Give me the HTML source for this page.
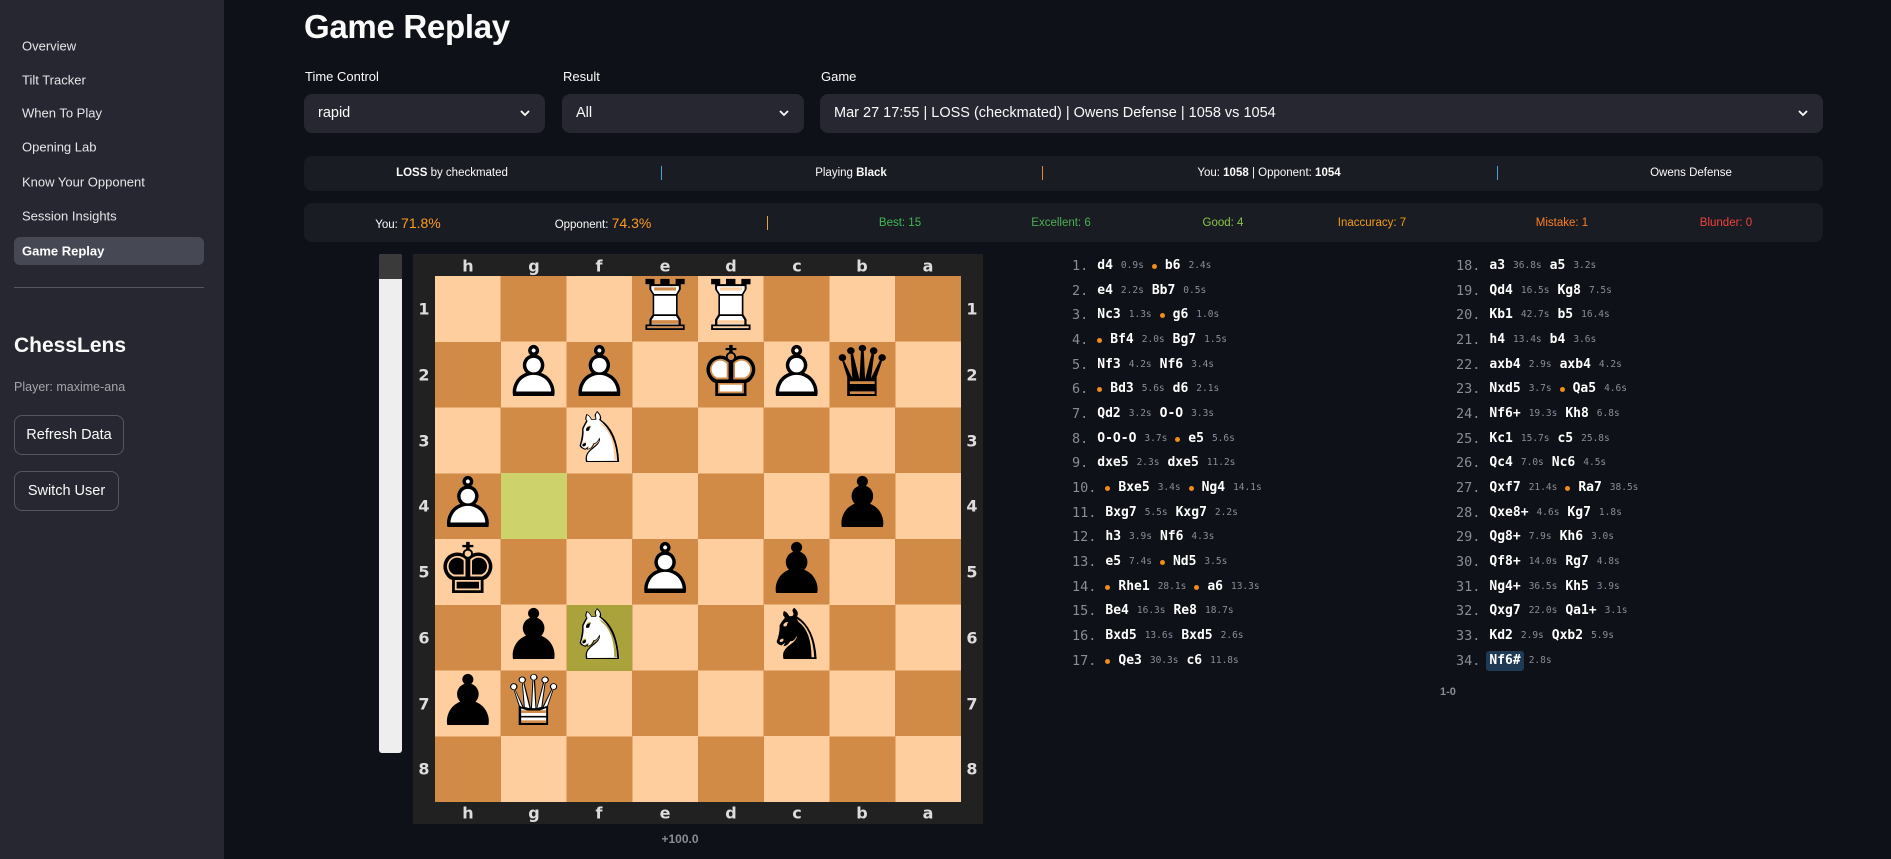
<!DOCTYPE html>
<html><head><meta charset="utf-8">
<style>
*{box-sizing:border-box;margin:0;padding:0}
body{width:1891px;height:859px;background:#0e1117;font-family:"Liberation Sans",sans-serif;color:#fafafa;position:relative;overflow:hidden}
.a{position:absolute}
#side{left:0;top:0;width:224px;height:859px;background:#262730}
.nav{position:absolute;left:22px;font-size:13px;color:#e6e6ea;transform:translateY(-50%)}
.sel{position:absolute;top:94px;height:39px;background:#262730;border-radius:8px;font-size:14.5px;line-height:39px;padding-left:14px}
.sel svg{position:absolute;right:14px;top:14px}
.lbl{position:absolute;top:69px;font-size:13px}
.bar{position:absolute;left:304px;width:1519px;background:#1a1c24;border-radius:8px}
.c{position:absolute;transform:translate(-50%,-50%);white-space:nowrap;font-size:11.5px}
.sep{position:absolute;width:1px;height:14px;transform:translateY(-50%)}
.row{position:absolute;height:20px;line-height:20px;font-family:"DejaVu Sans Mono","Liberation Mono",monospace;white-space:nowrap;display:flex;align-items:center}
.n{font-size:13.5px;color:#8a8d93;margin-right:9px}
.m{font-size:13px;font-weight:bold;color:#fff;margin-right:8px}
.t{font-size:9.5px;color:#8a8d93;margin-right:8px}
.d{display:inline-block;width:5px;height:5px;border-radius:50%;background:#f08c1a;margin-right:8px}
#board{left:435px;top:276px;width:526px;height:526px;background:repeating-conic-gradient(#d18b47 0 25%,#ffce9e 0 50%) 0 0/131.5px 131.5px}
.p{position:absolute;width:65.75px;height:65.75px;text-align:center;font-size:70px;font-family:"DejaVu Sans",sans-serif;overflow:visible}
.p span{position:absolute;left:-10px;right:-10px;top:-6px;line-height:72px}
.w1{color:#fff}.w2{color:#000}
.fl{position:absolute;font-size:16px;font-weight:bold;font-family:"DejaVu Sans",sans-serif;color:#ddd;transform:translate(-50%,-50%)}
</style></head><body>
<div id="side" class="a"></div>
<div class="nav" style="top:46px">Overview</div>
<div class="nav" style="top:80px">Tilt Tracker</div>
<div class="nav" style="top:113px">When To Play</div>
<div class="nav" style="top:147px">Opening Lab</div>
<div class="nav" style="top:182px">Know Your Opponent</div>
<div class="nav" style="top:216px">Session Insights</div>
<div class="a" style="left:14px;top:237px;width:190px;height:28px;background:#464854;border-radius:6px"></div>
<div class="nav" style="top:251px;font-weight:bold;color:#fff">Game Replay</div>
<div class="a" style="left:14px;top:287px;width:190px;height:1px;background:#55575f"></div>
<div class="a" style="left:14px;top:334px;font-size:21px;font-weight:bold">ChessLens</div>
<div class="a" style="left:14px;top:380px;font-size:12.5px;color:#a3a5ab">Player: maxime-ana</div>
<div class="a" style="left:14px;top:415px;width:110px;height:40px;border:1px solid #55575f;border-radius:8px;font-size:14.5px;line-height:38px;text-align:center">Refresh Data</div>
<div class="a" style="left:14px;top:471px;width:105px;height:40px;border:1px solid #55575f;border-radius:8px;font-size:14.5px;line-height:38px;text-align:center">Switch User</div>

<div class="a" style="left:304px;top:8px;font-size:33px;font-weight:bold;letter-spacing:-0.3px">Game Replay</div>
<div class="lbl" style="left:305px">Time Control</div>
<div class="lbl" style="left:563px">Result</div>
<div class="lbl" style="left:821px">Game</div>
<div class="sel" style="left:304px;width:241px">rapid<svg width="12" height="10" viewBox="0 0 12 10"><path d="M2 3l4 4 4-4" stroke="#fff" stroke-width="1.8" fill="none"/></svg></div>
<div class="sel" style="left:562px;width:242px">All<svg width="12" height="10" viewBox="0 0 12 10"><path d="M2 3l4 4 4-4" stroke="#fff" stroke-width="1.8" fill="none"/></svg></div>
<div class="sel" style="left:820px;width:1003px">Mar 27 17:55 | LOSS (checkmated) | Owens Defense | 1058 vs 1054<svg width="12" height="10" viewBox="0 0 12 10"><path d="M2 3l4 4 4-4" stroke="#fff" stroke-width="1.8" fill="none"/></svg></div>

<div class="bar" style="top:156px;height:35px"></div>
<div class="c" style="left:452px;top:173px"><b>LOSS</b> by checkmated</div>
<div class="sep" style="left:661px;top:173px;background:#4aa3d8"></div>
<div class="c" style="left:851px;top:173px">Playing <b>Black</b></div>
<div class="sep" style="left:1042px;top:173px;background:#e8853a"></div>
<div class="c" style="left:1269px;top:173px">You: <b>1058</b> | Opponent: <b>1054</b></div>
<div class="sep" style="left:1497px;top:173px;background:#4aa3d8"></div>
<div class="c" style="left:1691px;top:173px">Owens Defense</div>

<div class="bar" style="top:203px;height:39px"></div>
<div class="c" style="left:408px;top:223px">You: <span style="color:#ff9a1f;font-size:14px">71.8%</span></div>
<div class="c" style="left:603px;top:223px">Opponent: <span style="color:#ff9a1f;font-size:14px">74.3%</span></div>
<div class="sep" style="left:767px;top:223px;background:#e8a03a"></div>
<div class="c" style="left:900px;top:223px;color:#3fb950">Best: 15</div>
<div class="c" style="left:1061px;top:223px;color:#4caf50">Excellent: 6</div>
<div class="c" style="left:1223px;top:223px;color:#8bc34a">Good: 4</div>
<div class="c" style="left:1372px;top:223px;color:#f39c12">Inaccuracy: 7</div>
<div class="c" style="left:1562px;top:223px;color:#ff7f1f">Mistake: 1</div>
<div class="c" style="left:1726px;top:223px;color:#f0443a">Blunder: 0</div>

<!-- eval bar -->
<div class="a" style="left:379px;top:254px;width:23px;height:499px;background:#eeeeee;border-radius:3px"></div>
<div class="a" style="left:379px;top:254px;width:23px;height:25px;background:#3a3a3a;border-radius:3px 3px 0 0"></div>
<div class="a" style="left:650px;top:832px;width:60px;text-align:center;font-size:12px;font-weight:bold;color:#8a8d93">+100.0</div>

<!-- board -->
<div class="a" style="left:413px;top:254px;width:570px;height:570px;background:#212121"></div>
<div id="board" class="a"></div>
<div class="a" style="left:500.75px;top:473.25px;width:65.75px;height:65.75px;background:#cdd26a"></div>
<div class="a" style="left:566.5px;top:605px;width:65.75px;height:65.75px;background:#aaa23a"></div>

<div class="fl" style="left:468px;top:266px">h</div><div class="fl" style="left:534px;top:266px">g</div><div class="fl" style="left:599px;top:266px">f</div><div class="fl" style="left:665px;top:266px">e</div><div class="fl" style="left:731px;top:266px">d</div><div class="fl" style="left:797px;top:266px">c</div><div class="fl" style="left:862px;top:266px">b</div><div class="fl" style="left:928px;top:266px">a</div>
<div class="fl" style="left:468px;top:813px">h</div><div class="fl" style="left:534px;top:813px">g</div><div class="fl" style="left:599px;top:813px">f</div><div class="fl" style="left:665px;top:813px">e</div><div class="fl" style="left:731px;top:813px">d</div><div class="fl" style="left:797px;top:813px">c</div><div class="fl" style="left:862px;top:813px">b</div><div class="fl" style="left:928px;top:813px">a</div>
<div class="fl" style="left:424px;top:309px">1</div><div class="fl" style="left:424px;top:375px">2</div><div class="fl" style="left:424px;top:441px">3</div><div class="fl" style="left:424px;top:506px">4</div><div class="fl" style="left:424px;top:572px">5</div><div class="fl" style="left:424px;top:638px">6</div><div class="fl" style="left:424px;top:704px">7</div><div class="fl" style="left:424px;top:769px">8</div>
<div class="fl" style="left:972px;top:309px">1</div><div class="fl" style="left:972px;top:375px">2</div><div class="fl" style="left:972px;top:441px">3</div><div class="fl" style="left:972px;top:506px">4</div><div class="fl" style="left:972px;top:572px">5</div><div class="fl" style="left:972px;top:638px">6</div><div class="fl" style="left:972px;top:704px">7</div><div class="fl" style="left:972px;top:769px">8</div>

<div class="p" style="left:632.25px;top:276px"><span class="w1">♜</span><span class="w2">♖</span></div>
<div class="p" style="left:698px;top:276px"><span class="w1">♜</span><span class="w2">♖</span></div>
<div class="p" style="left:500.75px;top:341.75px"><span class="w1">♟</span><span class="w2">♙</span></div>
<div class="p" style="left:566.5px;top:341.75px"><span class="w1">♟</span><span class="w2">♙</span></div>
<div class="p" style="left:698px;top:341.75px"><span class="w1">♚</span><span class="w2">♔</span></div>
<div class="p" style="left:763.75px;top:341.75px"><span class="w1">♟</span><span class="w2">♙</span></div>
<div class="p" style="left:829.5px;top:341.75px"><span class="w2">♛</span></div>
<div class="p" style="left:566.5px;top:407.5px"><span class="w1">♞</span><span class="w2">♘</span></div>
<div class="p" style="left:435px;top:473.25px"><span class="w1">♟</span><span class="w2">♙</span></div>
<div class="p" style="left:829.5px;top:473.25px"><span class="w2">♟</span></div>
<div class="p" style="left:435px;top:539px"><span class="w2">♚</span></div>
<div class="p" style="left:632.25px;top:539px"><span class="w1">♟</span><span class="w2">♙</span></div>
<div class="p" style="left:763.75px;top:539px"><span class="w2">♟</span></div>
<div class="p" style="left:500.75px;top:604.75px"><span class="w2">♟</span></div>
<div class="p" style="left:566.5px;top:604.75px"><span class="w1">♞</span><span class="w2">♘</span></div>
<div class="p" style="left:763.75px;top:604.75px"><span class="w2">♞</span></div>
<div class="p" style="left:435px;top:670.5px"><span class="w2">♟</span></div>
<div class="p" style="left:500.75px;top:670.5px"><span class="w1">♛</span><span class="w2">♕</span></div>

<!-- moves left -->
<div class="row" style="left:1072px;top:256px"><span class="n">1.</span><span class="m">d4</span><span class="t">0.9s</span><span class="d"></span><span class="m">b6</span><span class="t">2.4s</span></div>
<div class="row" style="left:1072px;top:281px"><span class="n">2.</span><span class="m">e4</span><span class="t">2.2s</span><span class="m">Bb7</span><span class="t">0.5s</span></div>
<div class="row" style="left:1072px;top:305px"><span class="n">3.</span><span class="m">Nc3</span><span class="t">1.3s</span><span class="d"></span><span class="m">g6</span><span class="t">1.0s</span></div>
<div class="row" style="left:1072px;top:330px"><span class="n">4.</span><span class="d"></span><span class="m">Bf4</span><span class="t">2.0s</span><span class="m">Bg7</span><span class="t">1.5s</span></div>
<div class="row" style="left:1072px;top:355px"><span class="n">5.</span><span class="m">Nf3</span><span class="t">4.2s</span><span class="m">Nf6</span><span class="t">3.4s</span></div>
<div class="row" style="left:1072px;top:379px"><span class="n">6.</span><span class="d"></span><span class="m">Bd3</span><span class="t">5.6s</span><span class="m">d6</span><span class="t">2.1s</span></div>
<div class="row" style="left:1072px;top:404px"><span class="n">7.</span><span class="m">Qd2</span><span class="t">3.2s</span><span class="m">O-O</span><span class="t">3.3s</span></div>
<div class="row" style="left:1072px;top:429px"><span class="n">8.</span><span class="m">O-O-O</span><span class="t">3.7s</span><span class="d"></span><span class="m">e5</span><span class="t">5.6s</span></div>
<div class="row" style="left:1072px;top:453px"><span class="n">9.</span><span class="m">dxe5</span><span class="t">2.3s</span><span class="m">dxe5</span><span class="t">11.2s</span></div>
<div class="row" style="left:1072px;top:478px"><span class="n">10.</span><span class="d"></span><span class="m">Bxe5</span><span class="t">3.4s</span><span class="d"></span><span class="m">Ng4</span><span class="t">14.1s</span></div>
<div class="row" style="left:1072px;top:503px"><span class="n">11.</span><span class="m">Bxg7</span><span class="t">5.5s</span><span class="m">Kxg7</span><span class="t">2.2s</span></div>
<div class="row" style="left:1072px;top:527px"><span class="n">12.</span><span class="m">h3</span><span class="t">3.9s</span><span class="m">Nf6</span><span class="t">4.3s</span></div>
<div class="row" style="left:1072px;top:552px"><span class="n">13.</span><span class="m">e5</span><span class="t">7.4s</span><span class="d"></span><span class="m">Nd5</span><span class="t">3.5s</span></div>
<div class="row" style="left:1072px;top:577px"><span class="n">14.</span><span class="d"></span><span class="m">Rhe1</span><span class="t">28.1s</span><span class="d"></span><span class="m">a6</span><span class="t">13.3s</span></div>
<div class="row" style="left:1072px;top:601px"><span class="n">15.</span><span class="m">Be4</span><span class="t">16.3s</span><span class="m">Re8</span><span class="t">18.7s</span></div>
<div class="row" style="left:1072px;top:626px"><span class="n">16.</span><span class="m">Bxd5</span><span class="t">13.6s</span><span class="m">Bxd5</span><span class="t">2.6s</span></div>
<div class="row" style="left:1072px;top:651px"><span class="n">17.</span><span class="d"></span><span class="m">Qe3</span><span class="t">30.3s</span><span class="m">c6</span><span class="t">11.8s</span></div>

<!-- moves right -->
<div class="row" style="left:1456px;top:256px"><span class="n">18.</span><span class="m">a3</span><span class="t">36.8s</span><span class="m">a5</span><span class="t">3.2s</span></div>
<div class="row" style="left:1456px;top:281px"><span class="n">19.</span><span class="m">Qd4</span><span class="t">16.5s</span><span class="m">Kg8</span><span class="t">7.5s</span></div>
<div class="row" style="left:1456px;top:305px"><span class="n">20.</span><span class="m">Kb1</span><span class="t">42.7s</span><span class="m">b5</span><span class="t">16.4s</span></div>
<div class="row" style="left:1456px;top:330px"><span class="n">21.</span><span class="m">h4</span><span class="t">13.4s</span><span class="m">b4</span><span class="t">3.6s</span></div>
<div class="row" style="left:1456px;top:355px"><span class="n">22.</span><span class="m">axb4</span><span class="t">2.9s</span><span class="m">axb4</span><span class="t">4.2s</span></div>
<div class="row" style="left:1456px;top:379px"><span class="n">23.</span><span class="m">Nxd5</span><span class="t">3.7s</span><span class="d"></span><span class="m">Qa5</span><span class="t">4.6s</span></div>
<div class="row" style="left:1456px;top:404px"><span class="n">24.</span><span class="m">Nf6+</span><span class="t">19.3s</span><span class="m">Kh8</span><span class="t">6.8s</span></div>
<div class="row" style="left:1456px;top:429px"><span class="n">25.</span><span class="m">Kc1</span><span class="t">15.7s</span><span class="m">c5</span><span class="t">25.8s</span></div>
<div class="row" style="left:1456px;top:453px"><span class="n">26.</span><span class="m">Qc4</span><span class="t">7.0s</span><span class="m">Nc6</span><span class="t">4.5s</span></div>
<div class="row" style="left:1456px;top:478px"><span class="n">27.</span><span class="m">Qxf7</span><span class="t">21.4s</span><span class="d"></span><span class="m">Ra7</span><span class="t">38.5s</span></div>
<div class="row" style="left:1456px;top:503px"><span class="n">28.</span><span class="m">Qxe8+</span><span class="t">4.6s</span><span class="m">Kg7</span><span class="t">1.8s</span></div>
<div class="row" style="left:1456px;top:527px"><span class="n">29.</span><span class="m">Qg8+</span><span class="t">7.9s</span><span class="m">Kh6</span><span class="t">3.0s</span></div>
<div class="row" style="left:1456px;top:552px"><span class="n">30.</span><span class="m">Qf8+</span><span class="t">14.0s</span><span class="m">Rg7</span><span class="t">4.8s</span></div>
<div class="row" style="left:1456px;top:577px"><span class="n">31.</span><span class="m">Ng4+</span><span class="t">36.5s</span><span class="m">Kh5</span><span class="t">3.9s</span></div>
<div class="row" style="left:1456px;top:601px"><span class="n">32.</span><span class="m">Qxg7</span><span class="t">22.0s</span><span class="m">Qa1+</span><span class="t">3.1s</span></div>
<div class="row" style="left:1456px;top:626px"><span class="n">33.</span><span class="m">Kd2</span><span class="t">2.9s</span><span class="m">Qxb2</span><span class="t">5.9s</span></div>
<div class="row" style="left:1456px;top:651px"><span class="n">34.</span><span class="m" style="background:#1f3a55;border-radius:3px;padding:0 3px;margin-left:-3px;margin-right:5px">Nf6#</span><span class="t">2.8s</span></div>
<div class="a" style="left:1440px;top:686px;font-size:11px;font-weight:bold;color:#8a8d93">1-0</div>
</body></html>
